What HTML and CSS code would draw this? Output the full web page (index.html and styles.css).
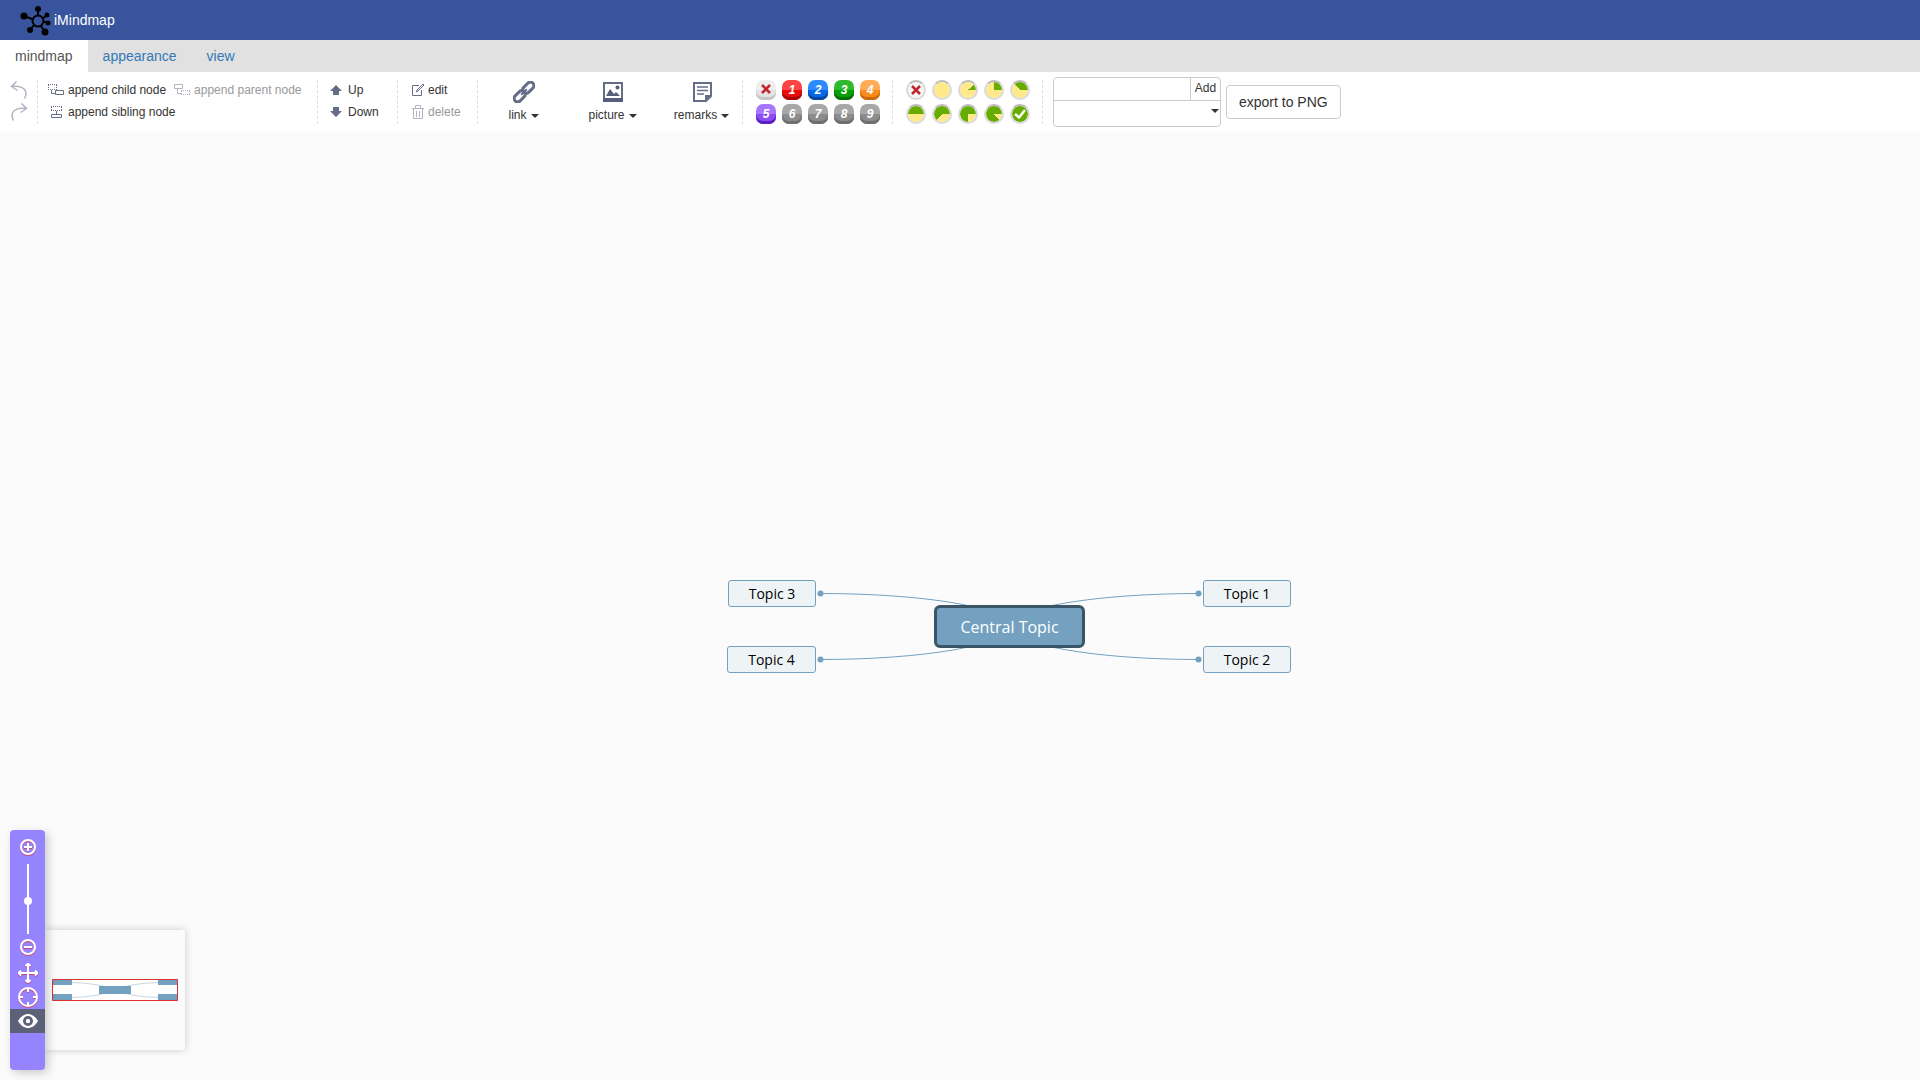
FILE: index.html
```html
<!DOCTYPE html>
<html lang="en">
<head>
    <meta charset="UTF-8">
    <meta name="viewport" content="width=device-width, initial-scale=1.0">
    <title>iMindmap</title>
    <link rel="stylesheet" href="styles.css">
</head>
<body>
    <header class="header">
        <svg class="logo" viewBox="0 0 32 32" width="32" height="32">
            <g stroke="#000" stroke-width="2" fill="none">
                <circle cx="18" cy="17" r="5.5"/>
                <path d="M18 11V5M12 15L4 12M23 14l5-3M24 18h4M14 21l-4 5M21 22l4 6"/>
            </g>
            <circle cx="18" cy="5" r="3"/>
            <circle cx="4" cy="12" r="3.5"/>
            <circle cx="27" cy="11" r="2.500"/>
            <circle cx="28" cy="19" r="2.500"/>
            <circle cx="10" cy="26" r="3"/>
            <circle cx="25" cy="28" r="3.500"/>
        </svg>
        <span>iMindmap</span>
    </header>

    <nav class="tabs">
        <a class="tab active" href="#mindmap">mindmap</a>
        <a class="tab" href="#appearance">appearance</a>
        <a class="tab" href="#view">view</a>
    </nav>

    <div class="toolbar">
        <div class="group history">
            <button class="tool disabled" aria-label="undo">
                <svg width="18" height="18" viewBox="0 0 18 18"><path d="M6.500 .500L1.500 5.500l6 4M1.500 5.500C10 4.500 16 7 16 12.500c0 2-.5 3.500-1.500 5"/></svg>
            </button>
            <button class="tool disabled" aria-label="redo">
                <svg width="18" height="18" viewBox="0 0 18 18"><path d="M11.500 .500l5 5-6 4M16.500 5.500C8 4.500 2 7 2 12.500c0 2 .5 3.500 1.500 5"/></svg>
            </button>
        </div>

        <div class="group append">
            <button class="tool">
                <svg width="17" height="14" viewBox="0 0 17 14"><path class="dots" d="M0 1.500h10M.500 2v5M8.500 2v5M0 6.500h7"/><path d="M3.500 7v3.500H7M7.500 7.500h8v4h-8z"/></svg>
                append child node
            </button>
            <button class="tool disabled">
                <svg width="17" height="14" viewBox="0 0 17 14"><path d="M.500 1.500h8v4h-8zM3.500 6v4.500H7"/><path class="dots" d="M7 7.500h9M7.500 8v4M15.500 8v4M7 11.500h9"/></svg>
                append parent node
            </button>
            <button class="tool">
                <svg width="17" height="14" viewBox="0 0 17 14"><path class="dots" d="M3 1.500h11M3.500 2v4M13.500 2v4M3 5.500h11"/><path d="M8.500 6v3M3.500 9.500h10v3h-10z"/></svg>
                append sibling node
            </button>
        </div>

        <div class="group arrange">
            <button class="tool">
                <svg class="solid" width="12" height="12" viewBox="0 0 12 12"><path d="M6 1l6 6H9v4H3V7H0z"/></svg>
                Up
            </button>
            <button class="tool">
                <svg class="solid" width="12" height="12" viewBox="0 0 12 12"><path d="M6 11l6-6H9V1H3v4H0z"/></svg>
                Down
            </button>
        </div>

        <div class="group edit">
            <button class="tool">
                <svg width="14" height="14" viewBox="0 0 14 14"><path d="M8 2.500H1.500v10h9V7M5.500 9L6 7l6-6 1 1-6 6z"/></svg>
                edit
            </button>
            <button class="tool disabled">
                <svg width="14" height="14" viewBox="0 0 14 14"><path d="M1 3.500h12M4.500 3V.500h5V3M2.500 4v9.500h9V4M5.500 6v6M8.500 6v6"/></svg>
                delete
            </button>
        </div>

        <div class="group attach">
            <button class="big">
                <svg width="22" height="22" viewBox="0 0 22 22"><g transform="rotate(-45 11 11)" fill="none" stroke="#656e86" stroke-width="3"><rect x="-1.500" y="7.500" width="13" height="7" rx="3.500"/><rect x="10.500" y="7.500" width="13" height="7" rx="3.500"/><path d="M7 11h8" stroke-width="2"/></g></svg>
                <span class="caret">link</span>
            </button>
            <button class="big">
                <svg width="22" height="22" viewBox="0 0 22 22"><path d="M2 2h18v18H2z" fill="#fff" stroke="#656e86" stroke-width="2"/><path d="M1 17h20v4H1zM4 15l4-7 4 5 2-2 4 4z" fill="#56607a"/><circle cx="15.500" cy="6.500" r="2" fill="#56607a"/></svg>
                <span class="caret">picture</span>
            </button>
            <button class="big">
                <svg width="22" height="22" viewBox="0 0 22 22"><path d="M3 2h17v13l-5 5H3z" fill="#fff" stroke="#656e86" stroke-width="2"/><path d="M14 21v-7h7z" fill="#656e86"/><path d="M6 6h11M6 9.500h11M6 13h7" stroke="#656e86" stroke-width="1.500"/></svg>
                <span class="caret">remarks</span>
            </button>
        </div>

        <div class="group marks">
            <button class="priority none" aria-label="no priority"><svg width="10" height="10" viewBox="0 0 10 10"><path d="M1 1l8 8M9 1L1 9"/></svg></button>
            <button class="priority p1">1</button>
            <button class="priority p2">2</button>
            <button class="priority p3">3</button>
            <button class="priority p4">4</button>
            <button class="priority p5">5</button>
            <button class="priority">6</button>
            <button class="priority">7</button>
            <button class="priority">8</button>
            <button class="priority">9</button>
        </div>

        <div class="group marks">
            <button class="progress none" aria-label="no progress"><svg width="10" height="10" viewBox="0 0 10 10"><path d="M1 1l8 8M9 1L1 9"/></svg></button>
            <button class="progress" aria-label="not started"></button>
            <button class="progress eighth1" aria-label="1/8 done"></button>
            <button class="progress eighth2" aria-label="1/4 done"></button>
            <button class="progress eighth3" aria-label="3/8 done"></button>
            <button class="progress eighth4" aria-label="1/2 done"></button>
            <button class="progress eighth5" aria-label="5/8 done"></button>
            <button class="progress eighth6" aria-label="3/4 done"></button>
            <button class="progress eighth7" aria-label="7/8 done"></button>
            <button class="progress done" aria-label="done"><svg width="12" height="10" viewBox="0 0 12 10"><path d="M1 5l4 3.500L11 1"/></svg></button>
        </div>

        <div class="group output">
            <div class="resource">
                <div class="resource-row">
                    <input type="text" aria-label="resource">
                    <button>Add</button>
                </div>
                <button class="resource-list" aria-label="resource list"></button>
            </div>
            <button class="export">export to PNG</button>
        </div>
    </div>

    <main class="canvas">
        <div class="map">
            <svg class="lines" width="566" height="94" viewBox="0 0 566 94">
                <path d="M283 46A189 32.500 0 0 1 472 13.500M283 46A189 33.500 0 0 0 472 79.500M283 46A189 32.500 0 0 0 93 13.500M283 46A189 33.500 0 0 1 93 79.500"/>
                <circle cx="471.500" cy="13.500" r="3"/>
                <circle cx="471.500" cy="79.500" r="3"/>
                <circle cx="93.500" cy="13.500" r="3"/>
                <circle cx="93.500" cy="79.500" r="3"/>
            </svg>
            <div class="node root">Central Topic</div>
            <div class="node topic1">Topic 1</div>
            <div class="node topic2">Topic 2</div>
            <div class="node topic3">Topic 3</div>
            <div class="node topic4">Topic 4</div>
        </div>

        <div class="overview">
            <svg width="128" height="24" viewBox="0 0 128 24">
                <path d="M2 2h124v20H2z" fill="#fff"/>
                <path d="M20 4.500Q48 5 64 12Q80 5 108 4.500M20 19.500Q48 19 64 12Q80 19 108 19.500" fill="none" stroke="#c5d6e1"/>
                <path d="M2 2h19v5H2zM2 16h19v6H2zM107 2h19v5h-19zM107 16h19v6h-19zM48 8h32v8H48z" fill="#73a1bf"/>
                <path d="M1.500 1.500h125v21h-125z" fill="none" stroke="#dc2f2f"/>
            </svg>
        </div>

        <div class="navigator">
            <button aria-label="zoom in"><svg width="20" height="20" viewBox="0 0 20 20"><circle cx="10" cy="10" r="7"/><path d="M6 10h8M10 6v8"/></svg></button>
            <input class="zoom" type="range" min="0" max="100" value="47" aria-label="zoom">
            <button class="zoom-out" aria-label="zoom out"><svg width="20" height="20" viewBox="0 0 20 20"><circle cx="10" cy="10" r="7"/><path d="M6 10h8"/></svg></button>
            <button aria-label="move"><svg width="20" height="20" viewBox="0 0 20 20"><path d="M1 10h18M10 1v18M7.500 3L10 .700 12.500 3M7.500 17l2.500 2.300 2.500-2.300M3 7.500L.700 10 3 12.500M17 7.500l2.300 2.500-2.300 2.500"/></svg></button>
            <button aria-label="locate root"><svg width="20" height="20" viewBox="0 0 20 20"><circle cx="10" cy="10" r="9"/><path d="M10 1v4M10 15v4M1 10h4M15 10h4"/></svg></button>
            <button class="active" aria-label="overview"><svg width="22" height="16" viewBox="0 0 22 16"><path class="eye" d="M1 8C4 3 7.500 1 11 1s7 2 10 7c-3 5-6.500 7-10 7S4 13 1 8z"/><circle class="iris" cx="11" cy="8" r="5"/><circle class="pupil" cx="11" cy="8" r="2.200"/></svg></button>
        </div>
    </main>
</body>
</html>
```

FILE: styles.css
```css
* {
    box-sizing: border-box;
}

body {
    margin: 0;
    min-height: 100vh;
    display: flex;
    flex-direction: column;
    font-family: "Liberation Sans", Arial, sans-serif;
    font-size: 12px;
    color: #333;
    background: #fbfbfb;
}

button {
    margin: 0;
    padding: 0;
    border: 0;
    background: none;
    font: inherit;
    color: inherit;
    cursor: pointer;
}

.header {
    display: flex;
    align-items: center;
    gap: 2px;
    height: 40px;
    padding-left: 20px;
    background: #38549d;
    color: #fff;
    font-size: 14px;
}

/* tabs */
.tabs {
    display: flex;
    height: 32px;
    background: #e1e1e1;
    font-size: 14px;
    line-height: 32px;
}

.tab {
    padding: 0 15px;
    color: #337ab7;
    text-decoration: none;
}

.tab.active {
    background: #fff;
    color: #555;
}

/* toolbar */
.toolbar {
    display: flex;
    height: 60px;
    padding: 8px 0;
    background: #fff;
}

.group {
    height: 44px;
    border-right: 1px dashed #ddd;
}

.tool {
    display: flex;
    align-items: center;
    gap: 3px;
    height: 22px;
    padding-bottom: 2px;
    white-space: nowrap;
}

.tool svg {
    fill: none;
    stroke: #656e86;
}

.tool svg.solid {
    fill: #656e86;
    stroke: none;
}

.tool .dots {
    stroke-dasharray: 1 1;
}

.tool.disabled {
    color: #999;
}

.tool.disabled svg {
    opacity: 0.5;
}

.history {
    width: 38px;
    padding-left: 10px;
}

.history svg {
    stroke-width: 1.5;
}

.append {
    width: 280px;
    padding-left: 10px;
    display: flex;
    flex-wrap: wrap;
    column-gap: 8px;
}

.arrange {
    width: 80px;
    padding-left: 12px;
}

.arrange .tool {
    gap: 6px;
}

.edit {
    width: 80px;
    padding-left: 13px;
}

.attach {
    display: flex;
    width: 265px;
    padding-left: 1px;
}

.big {
    display: flex;
    flex: none;
    flex-direction: column;
    align-items: center;
    justify-content: space-between;
    width: 89px;
    padding: 1px 0 2px;
}

.caret::after {
    content: "";
    display: inline-block;
    margin-left: 4px;
    vertical-align: middle;
    border-top: 4px solid;
    border-left: 4px solid transparent;
    border-right: 4px solid transparent;
}

.marks {
    display: grid;
    grid-template-columns: repeat(5, 20px);
    grid-auto-rows: 20px;
    gap: 4px 6px;
    width: 150px;
    padding-left: 13px;
}

.priority {
    height: 20px;
    border-radius: 7px;
    background: linear-gradient(#a8a8a8 50%, #8c8c8c 50%);
    box-shadow: inset 0 -3px #6f6f6f;
    color: #fff;
    font-size: 12px;
    font-weight: bold;
    font-style: italic;
    line-height: 17px;
}

.priority.p1 {
    background: linear-gradient(#fb4444 50%, #ea0b0b 50%);
    box-shadow: inset 0 -3px #a80505;
}

.priority.p2 {
    background: linear-gradient(#2d8bff 50%, #0768e6 50%);
    box-shadow: inset 0 -3px #0446a0;
}

.priority.p3 {
    background: linear-gradient(#2dba2d 50%, #07a007 50%);
    box-shadow: inset 0 -3px #056f05;
}

.priority.p4 {
    background: linear-gradient(#ffac57 50%, #f98b1f 50%);
    box-shadow: inset 0 -3px #cb6a0b;
}

.priority.p5 {
    background: linear-gradient(#a875ff 50%, #8b4bf5 50%);
    box-shadow: inset 0 -3px #5a20c4;
}

.priority.none {
    padding-bottom: 2px;
    background: linear-gradient(#eee 50%, #e3e3e3 50%);
    box-shadow: inset 0 -3px #c6c6c6;
}

.marks svg {
    display: block;
    margin: auto;
    fill: none;
    stroke: #c2272f;
    stroke-width: 2.5;
}

.progress {
    --start: 90deg;
    width: 20px;
    height: 20px;
    border: 2px solid #d9d9d9;
    border-top-color: #bbb;
    border-radius: 50%;
    background: conic-gradient(from var(--start), #67ad00 calc(90deg - var(--start)), #ffe98b 0) padding-box;
}

.eighth1 {
    --start: 45deg;
}

.eighth2 {
    --start: 0deg;
}

.eighth3 {
    --start: -45deg;
}

.eighth4 {
    --start: -90deg;
}

.eighth5 {
    --start: -135deg;
}

.eighth6 {
    --start: -180deg;
}

.eighth7 {
    --start: -225deg;
}

.progress.done {
    background: #67ad00 padding-box;
}

.progress.none {
    background: #f4f4f4 padding-box;
}

.progress.done svg {
    stroke: #fff;
}

.output {
    display: flex;
    align-items: center;
    gap: 5px;
    padding-left: 10px;
    border: 0;
}

.resource {
    display: flex;
    flex-direction: column;
    width: 168px;
    height: 50px;
    border: 1px solid #ccc;
    border-radius: 4px;
}

.resource-row {
    display: flex;
    height: 23px;
    border-bottom: 1px solid #ccc;
}

.resource-row input {
    flex: 1;
    min-width: 0;
    padding: 0 4px;
    border: 0;
    border-radius: 4px 0 0;
    font: inherit;
}

.resource-row button {
    width: 30px;
    padding-bottom: 2px;
    border-left: 1px solid #ccc;
}

.resource-list {
    flex: 1;
    display: flex;
    justify-content: flex-end;
    padding: 8px 1px 0 0;
}

.resource-list::after {
    content: "";
    border-top: 4px solid;
    border-left: 4px solid transparent;
    border-right: 4px solid transparent;
}

.export {
    height: 34px;
    padding: 0 12px;
    border: 1px solid #ccc;
    border-radius: 4px;
    font-size: 14px;
}

/* mind map */
.canvas {
    position: relative;
    flex: 1;
    overflow: hidden;
}

.map {
    position: absolute;
    top: 448px;
    left: calc(50% - 233px);
    width: 566px;
    height: 94px;
}

.lines {
    position: absolute;
    top: 0;
    left: 0;
    fill: #73a1bf;
}

.lines path {
    fill: none;
    stroke: #73a1bf;
}

.node {
    position: absolute;
    width: 88px;
    height: 27px;
    border: 1px solid #73a1bf;
    border-radius: 3px;
    background: #eef3f6;
    color: #000;
    font-family: "Open Sans", "Noto Sans", sans-serif;
    font-size: 14px;
    line-height: 25px;
    text-align: center;
    white-space: nowrap;
}

.root {
    top: 25px;
    left: 207px;
    width: 151px;
    height: 43px;
    border: 3px solid #3a5566;
    border-radius: 6px;
    background: #73a1bf;
    color: #fff;
    font-size: 16px;
    line-height: 38px;
}

.topic1 {
    top: 0;
    left: 476px;
}

.topic2 {
    top: 66px;
    left: 476px;
}

.topic3 {
    top: 0;
    left: 1px;
}

.topic4 {
    top: 66px;
    left: 0;
    width: 89px;
}

/* zoom bar and overview */
.navigator {
    position: absolute;
    left: 10px;
    bottom: 10px;
    display: flex;
    flex-direction: column;
    align-items: center;
    width: 35px;
    height: 240px;
    padding-top: 5px;
    border-radius: 4px;
    background: #9583ff;
    box-shadow: 3px 3px 10px rgba(0, 0, 0, 0.2);
}

.navigator button {
    display: flex;
    align-items: center;
    justify-content: center;
    width: 100%;
    height: 24px;
}

.navigator .zoom-out {
    margin-bottom: 2px;
}

.navigator svg {
    fill: none;
    stroke: #fff;
    stroke-width: 2;
    filter: drop-shadow(0 1px 0 rgba(217, 48, 63, 0.7));
}

.navigator .active {
    background: #5a6179;
}

.navigator .active svg {
    stroke: none;
    filter: none;
}

.eye,
.pupil {
    fill: #fff;
}

.iris {
    fill: #5a6179;
}

.zoom {
    appearance: none;
    writing-mode: vertical-lr;
    direction: rtl;
    width: 8px;
    height: 70px;
    margin: 5px 0 1px;
    background: linear-gradient(#fff, #fff) center / 2px 100% no-repeat;
}

.zoom::-webkit-slider-thumb {
    appearance: none;
    width: 8px;
    height: 8px;
    border-radius: 50%;
    background: #fff;
}

.overview {
    position: absolute;
    left: 45px;
    bottom: 30px;
    display: flex;
    align-items: center;
    justify-content: center;
    width: 140px;
    height: 120px;
    background: #fbfbfb;
    box-shadow: 0 0 8px rgba(0, 0, 0, 0.2);
}
```
